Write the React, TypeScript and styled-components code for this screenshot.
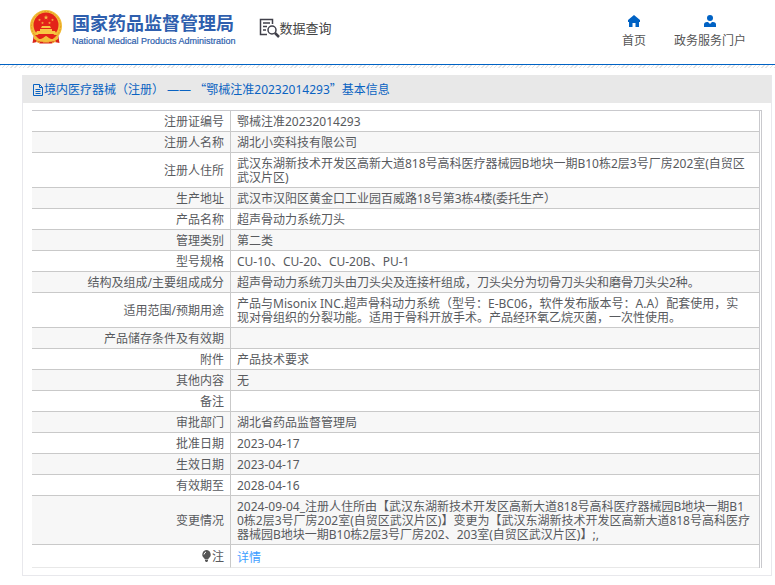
import React from "react";
import styled, { createGlobalStyle } from "styled-components";

const GlobalStyle = createGlobalStyle`
  * { box-sizing: border-box; }
  body {
    margin: 0;
    background: #fff;
    color: #585a5e;
    font: 12px/14px "Noto Sans", "Noto Sans CJK SC", sans-serif;
  }
`;

const Header = styled.header`
  display: flex;
  justify-content: space-between;
  height: 65px;
  padding: 0 29px 0 28px;
  border-bottom: 1px solid #0062c4;
`;

const Brand = styled.div`
  display: flex;
  align-items: flex-start;
  padding-top: 8px;
`;

const BrandLink = styled.a`
  display: flex;
  gap: 8px;
  color: #2f5fae;
  text-decoration: none;
`;

const BrandText = styled.span`
  display: flex;
  flex-direction: column;
  padding-top: 2px;
  white-space: nowrap;
`;

const BrandName = styled.strong`
  font: 700 18px/25px "Noto Sans CJK SC", sans-serif;
`;

const BrandEnglish = styled.span`
  font: 9px/12px "Liberation Sans", sans-serif;
  -webkit-text-stroke: 0.2px currentColor;
`;

const Query = styled.h1`
  display: flex;
  align-items: center;
  margin: 8px 0 0 23px;
  color: #444;
  font: 400 13px/24px "Noto Sans CJK SC", sans-serif;
  white-space: nowrap;
`;

const Nav = styled.nav`
  display: flex;
  gap: 28px;
  padding-top: 14px;
`;

const NavLink = styled.a`
  display: flex;
  flex-direction: column;
  align-items: center;
  gap: 4px;
  color: #555;
  font-size: 12px;
  line-height: 18px;
  text-decoration: none;
  white-space: nowrap;
`;

const Hatch = styled.div`
  height: 3px;
  background: repeating-linear-gradient(135deg, #e4e4e4 0 1px, #fff 1px 3px);
`;

const Panel = styled.main`
  margin: 7px 3px 9px 22px;
  border: 1px solid #e8e8ec;
  border-top: 0;
`;

const PanelTitle = styled.h2`
  display: flex;
  align-items: center;
  height: 28px;
  margin: 0;
  padding: 1px 9px 0;
  background: #e8e8e8;
  color: #0a63c2;
  font-size: 12px;
  font-weight: 400;
  line-height: 18px;
`;

const WideQuote = styled.span`
  font-family: "Noto Sans CJK SC", sans-serif;
`;

const TableFrame = styled.div`
  margin: 7px 9px;
  padding-right: 1px;
  border-top: 1px solid #c9c9cd;
  border-right: 1px solid #c9c9cd;
`;

const Table = styled.table`
  width: 100%;
  border-collapse: separate;
  border-spacing: 0;
  border-right: 1px solid #c9c9cd;
`;

const Row = styled.tr`
  &:nth-child(even) { background: #f7f7f7; }
  &:last-child > * { border-bottom-color: #e8e8e8; }
`;

const Label = styled.th`
  width: 199px;
  padding: 4px 6px 2px;
  border-right: 1px solid #c9c9c9;
  border-bottom: 1px solid #c9c9c9;
  font-weight: 400;
  text-align: right;
  white-space: nowrap;
`;

const Value = styled.td`
  height: 21px;
  padding: 4px 6px 2px;
  border-bottom: 1px solid #c9c9c9;
  white-space: pre-line;
  word-break: break-all;
`;

const Detail = styled.a`
  display: block;
  padding-top: 2px;
  color: #409eff;
  text-decoration: none;
`;

const Bulb = styled.svg`
  vertical-align: -1px;
`;

const rows: [string, string][] = [
  ["注册证编号", "鄂械注准20232014293"],
  ["注册人名称", "湖北小奕科技有限公司"],
  ["注册人住所", "武汉东湖新技术开发区高新大道818号高科医疗器械园B地块一期B10栋2层3号厂房202室(自贸区武汉片区)"],
  ["生产地址", "武汉市汉阳区黄金口工业园百威路18号第3栋4楼(委托生产）"],
  ["产品名称", "超声骨动力系统刀头"],
  ["管理类别", "第二类"],
  ["型号规格", "CU-10、CU-20、CU-20B、PU-1"],
  ["结构及组成/主要组成成分", "超声骨动力系统刀头由刀头尖及连接杆组成，刀头尖分为切骨刀头尖和磨骨刀头尖2种。"],
  ["适用范围/预期用途", "产品与Misonix INC.超声骨科动力系统（型号：E-BC06，软件发布版本号：A.A）配套使用，实\n现对骨组织的分裂功能。适用于骨科开放手术。产品经环氧乙烷灭菌，一次性使用。"],
  ["产品储存条件及有效期", ""],
  ["附件", "产品技术要求"],
  ["其他内容", "无"],
  ["备注", ""],
  ["审批部门", "湖北省药品监督管理局"],
  ["批准日期", "2023-04-17"],
  ["生效日期", "2023-04-17"],
  ["有效期至", "2028-04-16"],
  ["变更情况", "2024-09-04_注册人住所由【武汉东湖新技术开发区高新大道818号高科医疗器械园B地块一期B1\n0栋2层3号厂房202室(自贸区武汉片区)】变更为【武汉东湖新技术开发区高新大道818号高科医疗器械园B地块一期B10栋2层3号厂房202、203室(自贸区武汉片区)】;,"],
];

const star = (x: number, y: number, r: number) =>
  Array.from({ length: 10 }, (_, i) => {
    const a = (Math.PI * i) / 5 - Math.PI / 2;
    const q = i % 2 ? r * 0.4 : r;
    return `${x + Math.cos(a) * q},${y + Math.sin(a) * q}`;
  }).join(" ");

function Emblem() {
  return (
    <svg width="36" height="38" viewBox="0 0 36 38" aria-hidden="true">
      <path d="M6 26h24l1.500 9-5-1-3 1.500H12L9 34l-4.500 1z" fill="#d9241c" />
      <circle cx="18" cy="18" r="16" fill="#f3bd3a" />
      <circle cx="18" cy="18" r="14.500" fill="none" stroke="#e2a021" strokeWidth="1" strokeDasharray="2 1" />
      <circle cx="18" cy="17" r="12.500" fill="#e32219" />
      <polygon points={star(18, 9.5, 2.5)} fill="#f6b944" />
      <polygon points={star(11.5, 12, 1.5)} fill="#f6b944" />
      <polygon points={star(24.5, 12, 1.5)} fill="#f6b944" />
      <polygon points={star(14.5, 15, 1.5)} fill="#f6b944" />
      <polygon points={star(21.5, 15, 1.5)} fill="#f6b944" />
      <path d="M13 20l1-2h8l1 2zM12 21h12v2H12zM8 25l1-2h18l1 2v1H8z" fill="#f8c644" />
      <path d="M7 27h22l-4 4H11z" fill="#e32219" />
      <path d="M6 28q5 5 9 2l3-2 3 2q4 3 9-2v3q-5 4-10 2l-2-1-2 1q-5 2-10-2z" fill="#f3bd3a" />
      <circle cx="18" cy="31" r="2.500" fill="#f3bd3a" />
      <path d="M8 33l4 2M28 33l-4 2M15 34h6" stroke="#f3bd3a" strokeWidth="1" />
    </svg>
  );
}

export default function App() {
  return (
    <>
      <GlobalStyle />
      <Header>
        <Brand>
          <BrandLink href="#">
            <Emblem />
            <BrandText>
              <BrandName>国家药品监督管理局</BrandName>
              <BrandEnglish>National Medical Products Administration</BrandEnglish>
            </BrandText>
          </BrandLink>
          <Query>
            <svg width="21" height="20" viewBox="0 0 21 20" fill="none" stroke="#40404a" strokeWidth="1.500" aria-hidden="true">
              <path d="M13.500 6V1.500H1.500v15H8M4 5h7M4 8.500h4M4 12h3" />
              <circle cx="13" cy="12" r="4" />
              <path d="M16 15l4 4" strokeWidth="2.500" />
            </svg>
            数据查询
          </Query>
        </Brand>
        <Nav>
          <NavLink href="#">
            <svg width="14" height="14" viewBox="0 0 14 14" aria-hidden="true">
              <path d="M7 1L1 6v2h1v5h3.500V9h3v4H12V8h1V6z" fill="#0062c4" />
            </svg>
            首页
          </NavLink>
          <NavLink href="#">
            <svg width="14" height="14" viewBox="0 0 14 14" aria-hidden="true">
              <circle cx="7" cy="4" r="3" fill="#0062c4" />
              <path d="M1 13v-2.500Q1 8 4 8h1l2 2 2-2h1q3 0 3 2.500V13z" fill="#0062c4" />
            </svg>
            政务服务门户
          </NavLink>
        </Nav>
      </Header>
      <Hatch />
      <Panel>
        <PanelTitle>
          <svg width="12" height="12" viewBox="0 0 12 12" fill="none" stroke="#0a63c2" aria-hidden="true">
            <path d="M1.500 .5h6l3 3v8h-9zM7.500 .5v3h3M3.500 5.500h5M3.500 7.500h5M3.500 9.500h5" />
          </svg>
          <span>
            境内医疗器械（注册） —— <WideQuote>“</WideQuote>鄂械注准20232014293<WideQuote>”</WideQuote>基本信息
          </span>
        </PanelTitle>
        <TableFrame>
          <Table>
            <tbody>
              {rows.map(([label, value]) => (
                <Row key={label}>
                  <Label scope="row">{label}</Label>
                  <Value>{value}</Value>
                </Row>
              ))}
              <Row>
                <Label scope="row">
                  <Bulb width="11" height="12" viewBox="0 0 11 12" aria-hidden="true">
                    <path d="M5.500 0a4.500 4.500 0 0 1 2.500 8l-1 1.500H4L3 8A4.500 4.500 0 0 1 5.500 0zM4 10h3v1l-1 1H5l-1-1z" fill="#555" />
                    <path d="M3 4.500Q3.500 2.500 5 2" fill="none" stroke="#fff" />
                  </Bulb>
                  注
                </Label>
                <Value><Detail href="#">详情</Detail></Value>
              </Row>
            </tbody>
          </Table>
        </TableFrame>
      </Panel>
    </>
  );
}
